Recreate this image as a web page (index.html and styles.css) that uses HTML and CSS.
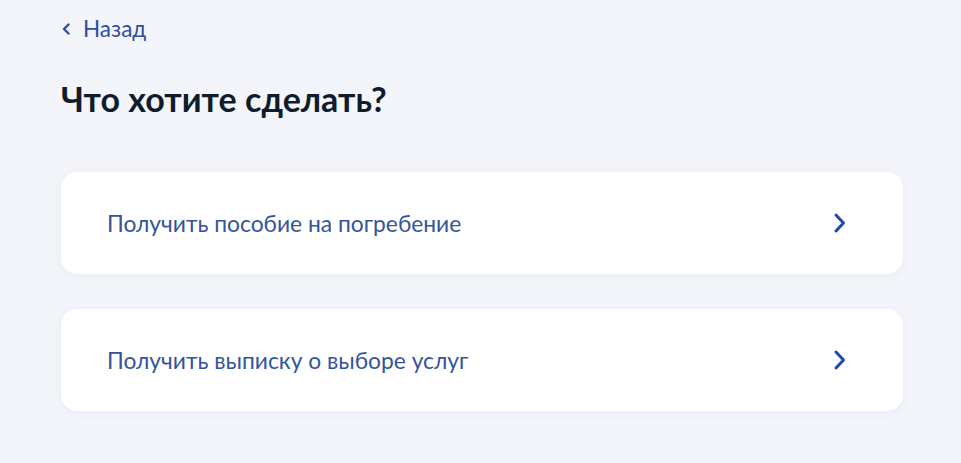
FILE: index.html
```html
<!DOCTYPE html>
<html lang="ru">
<head>
<meta charset="utf-8">
<link rel="stylesheet" href="styles.css">
</head>
<body>
<div class="page">
  <a class="back" href="#">
    <svg class="back-icon" width="10" height="12" viewBox="0 0 10 12"><path d="M7.5 1.5 L3 6 L7.5 10.5" fill="none" stroke="#2d4f9e" stroke-width="2.4" stroke-linecap="round" stroke-linejoin="round"/></svg>
    <span>Назад</span>
  </a>
  <h1 class="title">Что хотите сделать?</h1>
  <div class="options">
    <a class="option" href="#">
      <span class="option-text">Получить пособие на погребение</span>
      <svg class="chev" width="14" height="22" viewBox="0 0 14 22"><path d="M3 3 L10.5 11 L3 19" fill="none" stroke="#1f4aa8" stroke-width="3" stroke-linecap="round" stroke-linejoin="round"/></svg>
    </a>
    <a class="option" href="#">
      <span class="option-text">Получить выписку о выборе услуг</span>
      <svg class="chev" width="14" height="22" viewBox="0 0 14 22"><path d="M3 3 L10.5 11 L3 19" fill="none" stroke="#1f4aa8" stroke-width="3" stroke-linecap="round" stroke-linejoin="round"/></svg>
    </a>
  </div>
</div>
</body>
</html>
```
FILE: styles.css
```css
html, body {
  margin: 0;
  padding: 0;
}
body {
  background: #f3f5fa;
  font-family: Lato, "Noto Sans", sans-serif;
  width: 961px;
  height: 463px;
  overflow: hidden;
}
.page {
  padding: 16px 58px 0 61px;
}
.back {
  display: inline-flex;
  align-items: center;
  gap: 12px;
  text-decoration: none;
  color: #2d4f9e;
  font-size: 22.5px;
  line-height: 26px;
}
.back-icon {
  display: block;
}
.title {
  margin: 37px 0 0 0;
  font-size: 34px;
  line-height: 40px;
  font-weight: 700;
  color: #0f1c2e;
}
.options {
  margin-top: 53px;
  display: flex;
  flex-direction: column;
  gap: 35px;
}
.option {
  display: flex;
  align-items: center;
  justify-content: space-between;
  height: 102px;
  padding: 0 56px 0 46px;
  background: #ffffff;
  border-radius: 16px;
  box-shadow: 0 2px 8px rgba(30, 60, 120, 0.06);
  text-decoration: none;
}
.option-text {
  color: #34549c;
  font-size: 22.8px;
  line-height: 28px;
}
.chev {
  display: block;
}
```
